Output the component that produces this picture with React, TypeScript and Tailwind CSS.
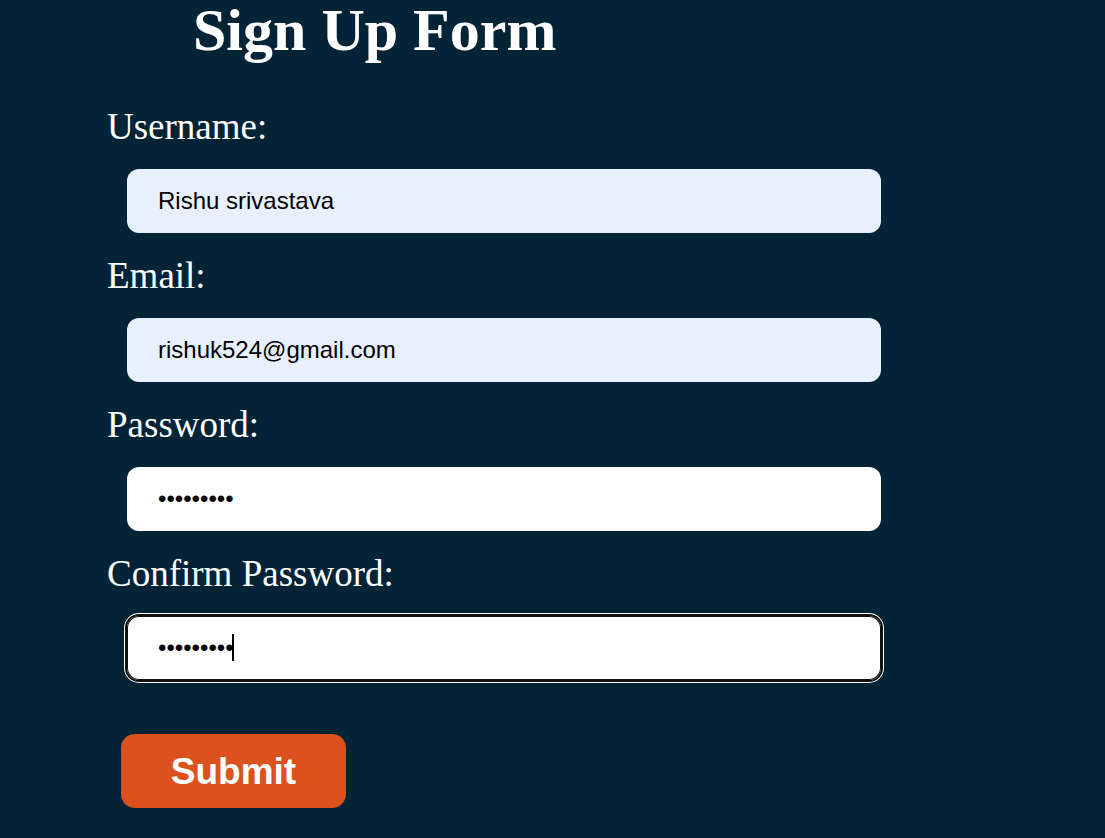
import React from "react";

const inputBase =
  "block mt-[21px] mb-[22px] ml-[20px] w-[754px] h-[64px] rounded-[12px] pl-[31px] pr-4 text-[24px] text-black font-['Liberation_Sans',Arial,sans-serif] outline-none border-0 caret-transparent";

export default function App() {
  return (
    <div className="min-h-screen w-full bg-[#032437] text-white font-['Liberation_Serif','Times_New_Roman',serif]">
      <div className="pl-[107px]">
        <h1 className="pl-[86px] pt-px text-[60px] font-bold leading-[59px]">Sign Up Form</h1>
        <form className="mt-[46px] flex flex-col items-start" onSubmit={(e) => e.preventDefault()}>
          <label className="block text-[37px] leading-[42px]">Username:</label>
          <input
            type="text"
            defaultValue="Rishu srivastava"
            className={inputBase + " bg-[#e8f0fe]"}
          />
          <label className="block text-[37px] leading-[42px]">Email:</label>
          <input
            type="email"
            defaultValue="rishuk524@gmail.com"
            className={inputBase + " bg-[#e8f0fe]"}
          />
          <label className="block text-[37px] leading-[42px]">Password:</label>
          <input
            type="password"
            defaultValue="123456789"
            className={inputBase + " bg-white"}
          />
          <label className="block text-[37px] leading-[42px]">Confirm Password:</label>
          <div className="relative">
            <input
              type="password"
              defaultValue="123456789"
              className={
                inputBase +
                " bg-white outline-2 outline-solid outline-[#101010] shadow-[inset_0_0_0_1px_#101010,0_0_0_3px_#ffffff]"
              }
            />
            <span className="absolute left-[125px] top-[39px] h-[27px] w-[2px] bg-black" />
          </div>
          <button
            type="submit"
            className="mt-[32px] ml-[14px] w-[225px] h-[74px] rounded-[14px] bg-[#db521e] text-white text-[37px] font-bold font-['Liberation_Sans',Arial,sans-serif] leading-none"
          >
            Submit
          </button>
        </form>
      </div>
    </div>
  );
}
